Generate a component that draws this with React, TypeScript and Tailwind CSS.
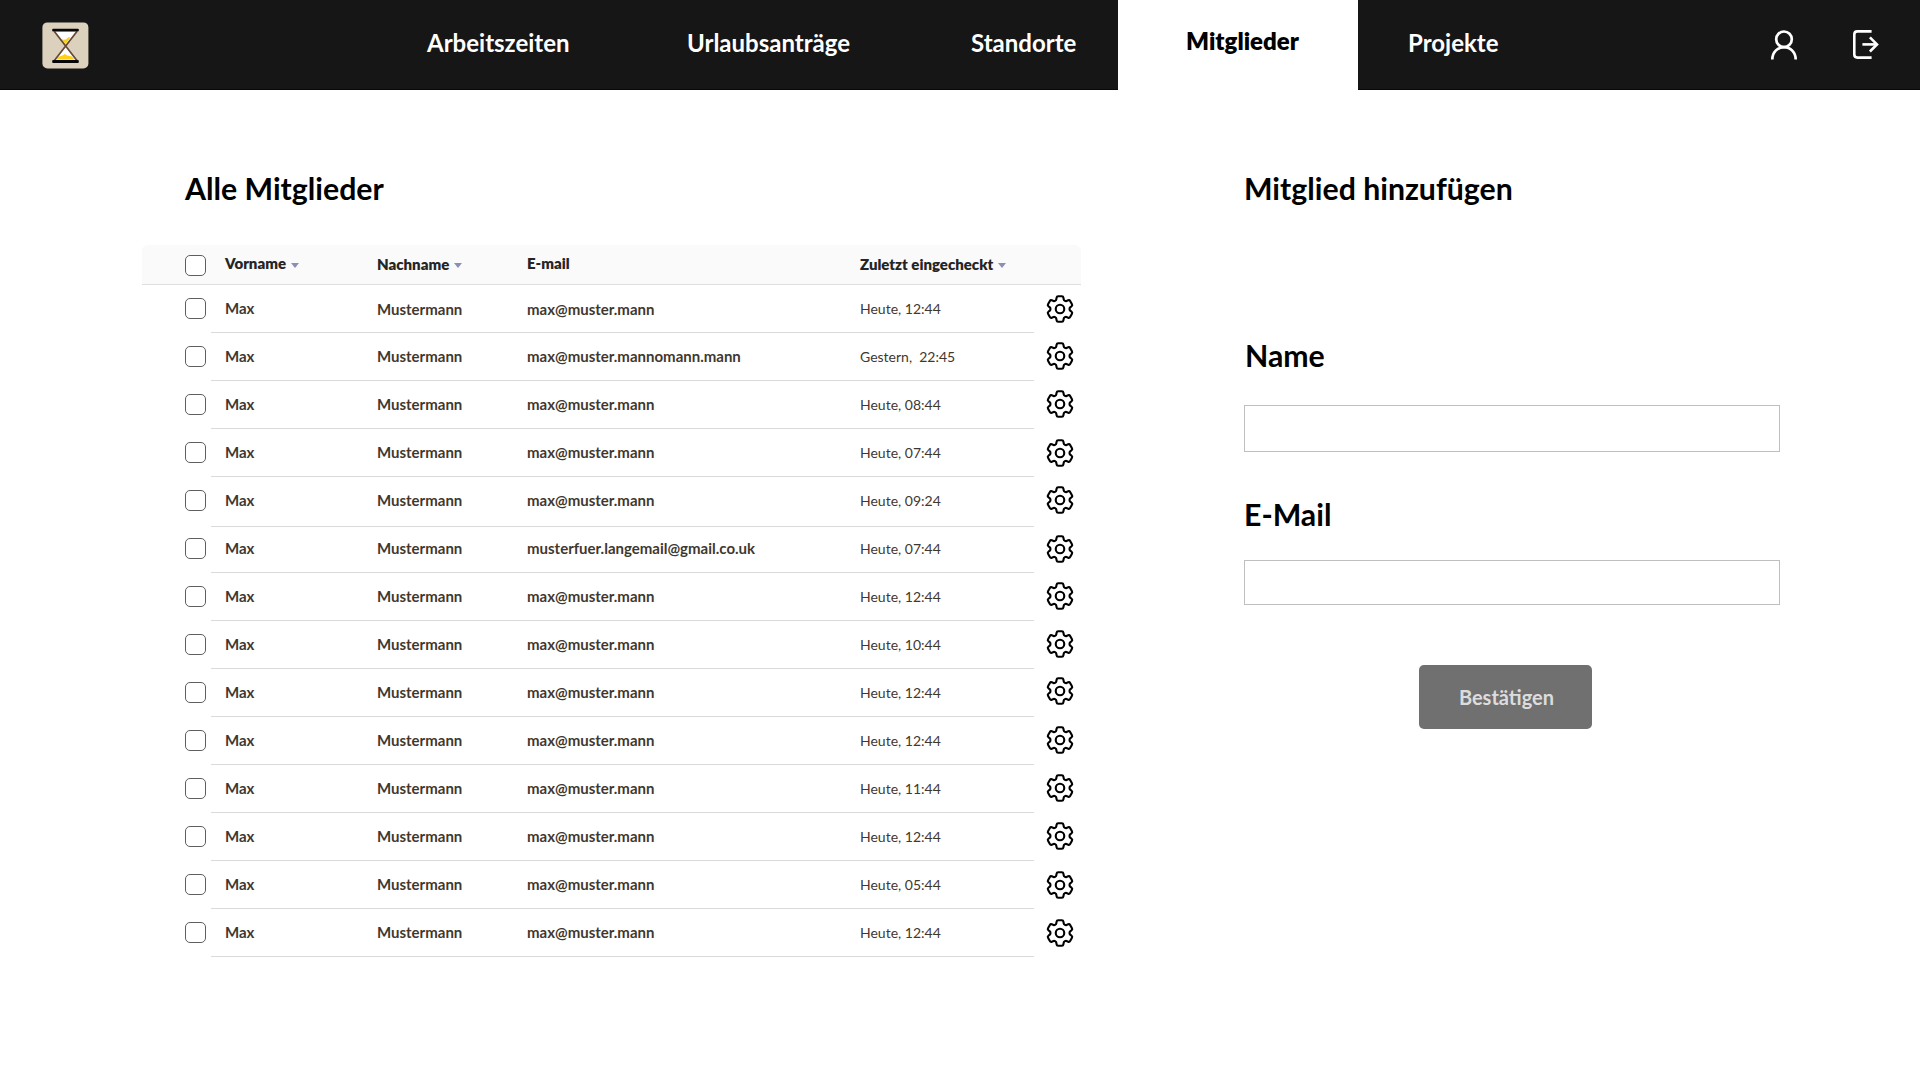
import { HiOutlineCog6Tooth } from "react-icons/hi2";
import clsx from "clsx";

type Member = { email: string; seen: string; gear: string };

const MM = "max@muster.mann";

const members: Member[] = [
  { email: MM, seen: "Heute, 12:44", gear: "top-0" },
  { email: "max@muster.mannomann.mann", seen: "Gestern,  22:45", gear: "-top-px" },
  { email: MM, seen: "Heute, 08:44", gear: "-top-px" },
  { email: MM, seen: "Heute, 07:44", gear: "top-0" },
  { email: MM, seen: "Heute, 09:24", gear: "-top-px" },
  { email: "musterfuer.langemail@gmail.co.uk", seen: "Heute, 07:44", gear: "top-0" },
  { email: MM, seen: "Heute, 12:44", gear: "-top-px" },
  { email: MM, seen: "Heute, 10:44", gear: "-top-px" },
  { email: MM, seen: "Heute, 12:44", gear: "-top-0.5" },
  { email: MM, seen: "Heute, 12:44", gear: "-top-px" },
  { email: MM, seen: "Heute, 11:44", gear: "-top-px" },
  { email: MM, seen: "Heute, 12:44", gear: "-top-px" },
  { email: MM, seen: "Heute, 05:44", gear: "top-0" },
  { email: MM, seen: "Heute, 12:44", gear: "top-0" },
];

function Logo() {
  return (
    <svg className="size-[47px]" viewBox="-0.4 -0.4 47 47">
      <rect width="46" height="46" rx="5" fill="#dcd1bd" />
      <path d="M12 9H34.5L23.3 23.7Z" fill="#fff" />
      <path d="M12 38L23.3 23.7L34.5 38Z" fill="#fff" />
      <path d="M18.5 16.6L21 17.4L23.5 17L25.8 14.8L28 15L23.3 21.6Z" fill="#fcd116" />
      <path d="M14.2 37.2L16.5 34.2L20 33L22.4 31.6L25 33L29.5 34L32 37.2Z" fill="#fcd116" />
      <path d="M12 9L34.5 38M34.5 9L12 38" stroke="#654633" strokeWidth="1.7" />
      <rect x="9.8" y="6.4" width="26.6" height="2.6" rx="1" fill="#060606" />
      <rect x="9.8" y="37.6" width="26.6" height="3" rx="1" fill="#060606" />
    </svg>
  );
}

function UserIcon() {
  return (
    <svg className="h-[30px] w-[28px]" viewBox="0 0 28 30" fill="none" stroke="#fff" strokeWidth="2.7">
      <circle cx="14" cy="9.3" r="7.8" />
      <path d="M2.3 29.6C2.3 22.3 7.5 17.2 14 17.2S25.7 22.3 25.7 29.6" />
    </svg>
  );
}

function LogoutIcon() {
  return (
    <svg className="h-[30px] w-[28px]" viewBox="0 0 28 30" fill="none" stroke="#fff" strokeWidth="2.6">
      <path d="M19.6 1.4H5.4Q2.3 1.4 2.3 4.5V24.5Q2.3 27.6 5.4 27.6H19.6" />
      <path d="M10.4 14.4H25" />
      <path d="M17.9 7.3L25 14.4L17.9 21.5" />
    </svg>
  );
}

function Checkbox() {
  return <span className="block size-[21px] shrink-0 rounded-[5px] border border-[#5e5e5e] bg-white" />;
}

function Sort({ className }: { className?: string }) {
  return (
    <svg className={clsx("relative ml-[5px] h-[5px] w-[8px]", className)} viewBox="0 0 8 5">
      <path d="M0 0H8L4 5Z" fill="#8b8fb5" />
    </svg>
  );
}

const cols = "grid grid-cols-[152px_150px_333px_1fr]";

export default function App() {
  return (
    <div className="h-[1080px] w-[1920px] overflow-hidden bg-white font-['Lato','Liberation_Sans',sans-serif] text-black">
      <header className="flex h-[90px] bg-[#161616] text-2xl font-bold text-white shadow-[inset_0_-1px_0_#0d050d]">
        <div className="w-[427px] pt-[22px] pl-[42px]">
          <Logo />
        </div>
        <nav className="flex leading-[86px] whitespace-nowrap">
          <a className="w-[260px]">Arbeitszeiten</a>
          <a className="w-[284px]">Urlaubsanträge</a>
          <a className="w-[147px]">Standorte</a>
          <a className="w-[240px] bg-white pl-[9px] text-center leading-[82px] font-extrabold text-black">Mitglieder</a>
          <a className="w-[200px] pl-[50px]">Projekte</a>
        </nav>
        <div className="ml-auto flex gap-[54px] pt-[30px] pr-[40px]">
          <UserIcon />
          <LogoutIcon />
        </div>
      </header>

      <main className="flex">
        <section className="w-[1101px] pl-[142px]">
          <h1 className="mt-[74px] pl-[43px] text-[30.25px] leading-[48px] font-bold">Alle Mitglieder</h1>
          <div className="mt-[33px] w-[939px]">
            <div className="flex h-10 items-center rounded-t-md border-b border-[#dfdfe1] bg-[#fafafa] pt-[2px] pl-[43px]">
              <Checkbox />
              <div className={clsx(cols, "-mt-[5px] ml-[19px] flex-1 items-start text-[15px] leading-[18px] font-extrabold text-[#252525]")}>
                <div className="flex items-center">Vorname<Sort className="top-[3px]" /></div>
                <div className="flex items-center pt-px">Nachname<Sort className="top-0.5" /></div>
                <div>E-mail</div>
                <div className="flex items-center pt-px">Zuletzt eingecheckt<Sort className="top-0.5" /></div>
              </div>
            </div>
            {members.map((m, i) => (
              <div key={i} className={clsx("flex pl-[43px]", i === 5 ? "h-[46px]" : i === 4 ? "h-[50px]" : "h-12")}>
                <div className={clsx("flex items-center", i === 5 ? "h-[43px]" : "h-[47px]")}>
                  <Checkbox />
                </div>
                <div
                  className={clsx(
                    cols,
                    "ml-[5px] w-[823px] content-center border-b border-[#dadada] pl-[14px] text-[15px] leading-[18px] font-bold text-[#3f382f]",
                    i === 4 || i === 5 ? "pb-[3px]" : "pb-px"
                  )}
                >
                  <div>Max</div>
                  <div className={i === 0 ? "relative top-px" : undefined}>Mustermann</div>
                  <div className={i === 0 ? "relative top-px" : undefined}>{m.email}</div>
                  <div className="relative top-px text-sm leading-[18px] font-normal whitespace-pre">{m.seen}</div>
                </div>
                <div className={clsx("ml-[9px] flex items-center", i === 5 ? "h-[43px]" : "h-[47px]")}>
                  <HiOutlineCog6Tooth className={clsx("relative text-black", m.gear)} size={34} />
                </div>
              </div>
            ))}
          </div>
        </section>

        <section className="ml-[143px] w-[536px]">
          <h2 className="mt-[74px] text-[30.25px] leading-[48px] font-bold">Mitglied hinzufügen</h2>
          <label className="mt-[119px] block pl-px text-[30.25px] leading-[48px] font-bold">Name</label>
          <input className="mt-[26px] block h-[47px] w-full border border-[#bfbfbf] bg-white px-3" />
          <label className="mt-[38px] block text-[30.25px] leading-[48px] font-bold">E-Mail</label>
          <input className="mt-[22px] block h-[45px] w-full border border-[#bfbfbf] bg-white px-3" />
          <button className="mt-[60px] ml-[175px] block h-16 w-[173px] rounded-[5px] bg-[#707070] pl-0.5 text-xl font-bold text-[#dcdcdc]">
            Bestätigen
          </button>
        </section>
      </main>
    </div>
  );
}
